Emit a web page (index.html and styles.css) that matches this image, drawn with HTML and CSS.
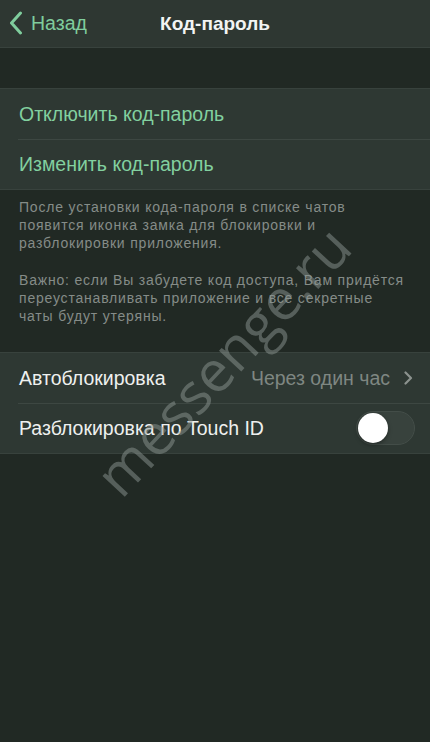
FILE: index.html
```html
<!DOCTYPE html>
<html lang="ru">
<head>
<meta charset="utf-8">
<link rel="stylesheet" href="styles.css">
</head>
<body>
<div class="screen">
  <header class="nav">
    <div class="back">
      <svg class="back-icon" width="14" height="24" viewBox="0 0 14 24"><path d="M11.5 2 L2.5 12 L11.5 22" fill="none" stroke="currentColor" stroke-width="3" stroke-linecap="round" stroke-linejoin="round"/></svg>
      <span>Назад</span>
    </div>
    <div class="title">Код-пароль</div>
  </header>
  <div class="spacer"></div>
  <section class="group">
    <div class="row"><span class="green">Отключить код-пароль</span></div>
    <div class="row"><span class="green">Изменить код-пароль</span></div>
  </section>
  <div class="footer">
    <p>После установки кода-пароля в списке чатов<br>появится иконка замка для блокировки и<br>разблокировки приложения.</p>
    <p>Важно: если Вы забудете код доступа, Вам придётся<br>переустанавливать приложение и все секретные<br>чаты будут утеряны.</p>
  </div>
  <section class="group">
    <div class="row">
      <span class="label">Автоблокировка</span>
      <span class="value">Через один час</span>
      <svg class="chev" width="9" height="14" viewBox="0 0 9 14"><path d="M1.5 1.5 L7 7 L1.5 12.5" fill="none" stroke="currentColor" stroke-width="2.2" stroke-linecap="round" stroke-linejoin="round"/></svg>
    </div>
    <div class="row">
      <span class="label">Разблокировка по Touch ID</span>
      <span class="toggle"><span class="knob"></span></span>
    </div>
  </section>
  <div class="watermark">messenge.ru</div>
</div>
</body>
</html>
```
FILE: styles.css
```css
* { box-sizing: border-box; }
html, body { margin: 0; padding: 0; }
body {
  background: #212924;
  font-family: "Liberation Sans", Arial, sans-serif;
  width: 430px;
  height: 742px;
  overflow: hidden;
}
.screen {
  position: relative;
  width: 430px;
  height: 742px;
  background: #212924;
  overflow: hidden;
}
.nav {
  height: 48px;
  background: #2e3732;
  border-bottom: 1px solid #38423d;
  display: flex;
  align-items: center;
  position: relative;
}
.back {
  display: flex;
  align-items: center;
  gap: 8px;
  padding-left: 9px;
  color: #7fcd9d;
  font-size: 19.5px;
}
.back-icon { display: block; margin-top: -1px; }
.title {
  position: absolute;
  left: 0;
  right: 0;
  text-align: center;
  color: #f2f4f3;
  font-weight: bold;
  font-size: 19px;
  pointer-events: none;
}
.spacer { height: 40px; }
.group {
  background: #2e3833;
  border-top: 1px solid #38423d;
  border-bottom: 1px solid #38423d;
}
.row {
  height: 50px;
  display: flex;
  align-items: center;
  padding: 0 17px 0 19px;
  font-size: 19.5px;
  position: relative;
}
.row + .row::before {
  content: "";
  position: absolute;
  top: 0;
  left: 18px;
  right: 0;
  height: 1px;
  background: #3d4742;
}
.green { color: #82d09f; }
.label { color: #eef0ef; flex: 1; }
.value { color: #7f8782; margin-right: 14px; }
.chev { color: #8b928e; display: block; }
.footer {
  padding: 8px 10px 27px 19px;
  color: #858c88;
  font-size: 14px;
  letter-spacing: 0.8px;
  line-height: 18px;
  white-space: nowrap;
}
.footer p { margin: 0 0 19px; }
.footer p:last-child { margin-bottom: 0; }
.toggle {
  width: 59px;
  height: 34px;
  border-radius: 17px;
  background: #38423d;
  border: 1px solid #434d48;
  position: relative;
  margin-right: -2px;
}
.knob {
  position: absolute;
  left: 1px;
  top: 1px;
  width: 30px;
  height: 30px;
  border-radius: 50%;
  background: #ffffff;
  box-shadow: 0 2px 4px rgba(0,0,0,0.35);
}
.watermark {
  position: absolute;
  left: 222px;
  top: 360px;
  font-family: "Open Sans", sans-serif;
  font-size: 57px;
  color: rgba(140, 150, 145, 0.5);
  transform: translate(-50%, -50%) rotate(-47deg);
  transform-origin: center;
  pointer-events: none;
  white-space: nowrap;
}
```
